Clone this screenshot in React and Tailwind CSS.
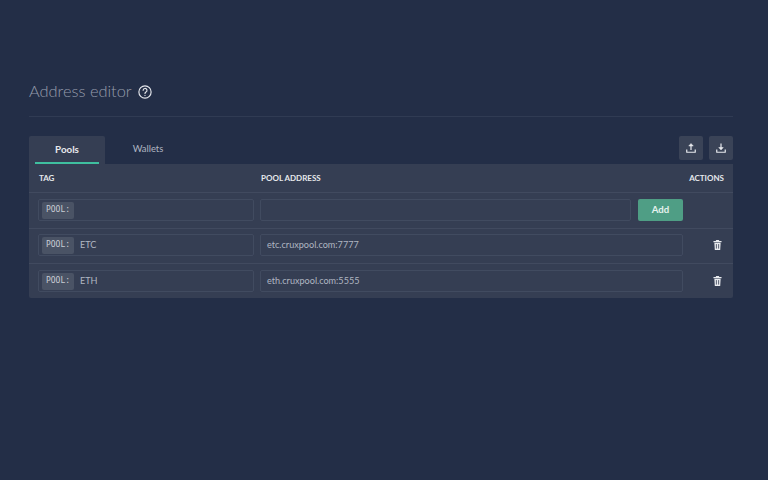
import React from "react";

function TagInput({ value }) {
  return (
    <div className="flex items-center w-[216px] h-[22px] shrink-0 border border-[#414b60] rounded-[2px] pl-[3px]">
      <span className="flex items-center justify-center w-[32px] h-[17px] bg-[#4a5365] rounded-[2px] font-['DejaVu_Sans_Mono',monospace] text-[8px] text-[#c8ccd4]">
        POOL:
      </span>
      <span className="ml-[6px] text-[9.1px] text-[#b0b6c2]">{value}</span>
    </div>
  );
}

function AddressInput({ value, width }) {
  return (
    <div className={`flex items-center h-[22px] border border-[#414b60] rounded-[2px] pl-[6px] text-[9.1px] text-[#b0b6c2] ${width}`}>
      {value}
    </div>
  );
}

function TrashIcon() {
  return (
    <svg width="9" height="10" viewBox="0 0 20 22">
      <path d="M7 0h6l1 2h5v3H1V2h5z" fill="#e8eaee" />
      <path d="M3 6h14l-1 16H4z" fill="#e8eaee" />
      <path d="M7.5 9v10M12.5 9v10" stroke="#353e53" strokeWidth="1.8" />
    </svg>
  );
}

function PoolRow({ tag, address, rowClass }) {
  return (
    <div className={`flex items-start h-[35px] pl-[9px] border-t border-[#414a5f] ${rowClass}`}>
      <TagInput value={tag} />
      <div className="ml-[6px]">
        <AddressInput value={address} width="w-[423px]" />
      </div>
      <div className="flex-1 flex justify-end pr-[11px] h-[22px] items-center">
        <TrashIcon />
      </div>
    </div>
  );
}

export default function App() {
  return (
    <div className="w-[768px] h-[480px] bg-[#232e47] font-['Lato',sans-serif] overflow-hidden">
      <div className="ml-[29px] mr-[35px] pt-[79px]">
        <div className="flex items-center h-[25px] gap-[6px]">
          <h1 className="text-[16.4px] font-light leading-none text-[#959cab]">Address editor</h1>
          <svg width="14" height="14" viewBox="0 0 24 24" fill="none" stroke="#e4e6eb" strokeWidth="2" strokeLinecap="round">
            <circle cx="12" cy="12" r="10.5" />
            <path d="M8.8 9.2a3.3 3.3 0 1 1 4.9 2.9c-1 .6-1.7 1.2-1.7 2.4" />
            <path d="M12 17.8v.1" />
          </svg>
        </div>
        <div className="mt-[12px] border-t border-[#303b53]" />

        <div className="mt-[19px] flex items-end justify-between h-[28px]">
          <div className="flex h-full">
            <div className="relative flex items-center justify-center w-[76px] h-full pb-[1px] bg-[#353e53] text-[9.8px] font-bold text-[#e6e8ec] rounded-t-[2px]">
              Pools
              <div className="absolute left-[6px] right-[6px] bottom-0 h-[2px] bg-[#3fbf9f]" />
            </div>
            <div className="flex items-center justify-center w-[86px] h-full pb-[1px] text-[9.4px] text-[#b0b6c2]">
              Wallets
            </div>
          </div>
          <div className="flex gap-[6px] self-start">
            <button className="flex items-center justify-center w-[24px] h-[24px] bg-[#3a4357] rounded-[2px]">
              <svg width="10" height="10" viewBox="0 0 20 20" fill="none" stroke="#e8eaee" strokeWidth="2.4" strokeLinejoin="round">
                <path d="M10 14V4" />
                <path d="M10 1l4.5 5h-9z" fill="#e8eaee" strokeWidth="1" />
                <path d="M1.5 13v5.5h17V13" />
              </svg>
            </button>
            <button className="flex items-center justify-center w-[24px] h-[24px] bg-[#3a4357] rounded-[2px]">
              <svg width="10" height="10" viewBox="0 0 20 20" fill="none" stroke="#e8eaee" strokeWidth="2.4" strokeLinejoin="round">
                <path d="M10 1v10" />
                <path d="M10 14l4.5-5h-9z" fill="#e8eaee" strokeWidth="1" />
                <path d="M1.5 13v5.5h17V13" />
              </svg>
            </button>
          </div>
        </div>

        <div className="bg-[#353e53] rounded-b-[2px]">
          <div className="flex items-center h-[28px] pl-[10px] pr-[9px] text-[8px] font-bold text-[#e6e8ec]">
            <div className="w-[222px]">TAG</div>
            <div className="flex-1">POOL ADDRESS</div>
            <div>ACTIONS</div>
          </div>
          <div className="flex items-start h-[36px] pl-[9px] pt-[6px] border-t border-[#414a5f]">
            <TagInput value="" />
            <div className="ml-[6px]">
              <AddressInput value="" width="w-[371px]" />
            </div>
            <button className="ml-[7px] w-[45px] h-[22px] bg-[#4f9e85] rounded-[2px] text-[9.6px] font-bold text-[#e6f2ee]">
              Add
            </button>
          </div>
          <PoolRow tag="ETC" address="etc.cruxpool.com:7777" rowClass="pt-[5px]" />
          <PoolRow tag="ETH" address="eth.cruxpool.com:5555" rowClass="pt-[6px]" />
        </div>
      </div>
    </div>
  );
}
